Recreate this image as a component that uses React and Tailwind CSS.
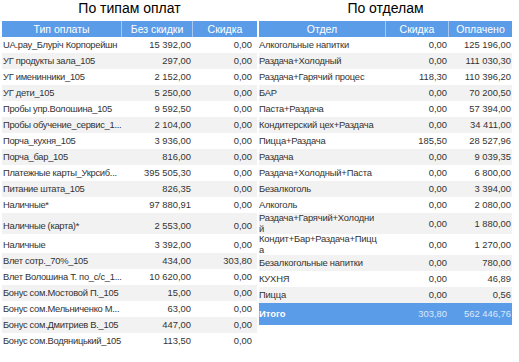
const payments = [
  ['UA.pay_Блуріч Корпорейшн', '15 392,00', '0,00'],
  ['УГ продукты зала_105', '297,00', '0,00'],
  ['УГ именинники_105', '2 152,00', '0,00'],
  ['УГ дети_105', '5 250,00', '0,00'],
  ['Пробы упр.Волошина_105', '9 592,50', '0,00'],
  ['Пробы обучение_сервис_1...', '2 104,00', '0,00'],
  ['Порча_кухня_105', '3 936,00', '0,00'],
  ['Порча_бар_105', '816,00', '0,00'],
  ['Платежные карты_Укрсиб...', '395 505,30', '0,00'],
  ['Питание штата_105', '826,35', '0,00'],
  ['Наличные*', '97 880,91', '0,00'],
  ['Наличные (карта)*', '2 553,00', '0,00', 'h-[21px]'],
  ['Наличные', '3 392,00', '0,00', 'h-[19px]'],
  ['Влет сотр._70%_105', '434,00', '303,80'],
  ['Влет Волошина Т. по_с/с_1...', '10 620,00', '0,00'],
  ['Бонус сом.Мостовой П._105', '15,00', '0,00'],
  ['Бонус сом.Мельниченко М...', '63,00', '0,00'],
  ['Бонус сом.Дмитриев В._105', '447,00', '0,00'],
  ['Бонус сом.Водяницький_105', '113,50', '0,00'],
]

const departments = [
  [['Алкогольные напитки'], '0,00', '125 196,00'],
  [['Раздача+Холодный'], '0,00', '111 030,30'],
  [['Раздача+Гарячий процес'], '118,30', '110 396,20'],
  [['БАР'], '0,00', '70 200,50'],
  [['Паста+Раздача'], '0,00', '57 394,00'],
  [['Кондитерский цех+Раздача'], '0,00', '34 411,00'],
  [['Пицца+Раздача'], '185,50', '28 527,96'],
  [['Раздача'], '0,00', '9 039,35'],
  [['Раздача+Холодный+Паста'], '0,00', '6 800,00'],
  [['Безалкоголь'], '0,00', '3 394,00'],
  [['Алкоголь'], '0,00', '2 080,00'],
  [['Раздача+Гарячий+Холодни', 'й'], '0,00', '1 880,00', 'h-[21px]'],
  [['Кондит+Бар+Раздача+Пицц', 'а'], '0,00', '1 270,00', 'h-[21px]'],
  [['Безалкогольные напитки'], '0,00', '780,00'],
  [['КУХНЯ'], '0,00', '46,89'],
  [['Пицца'], '0,00', '0,56'],
]

const font = { fontFamily: '"Liberation Sans", Arial, sans-serif' }

function Title({ children }) {
  return (
    <div className="h-[21px] text-center text-[14px] leading-[17px] text-black">{children}</div>
  )
}

function PaymentsTable() {
  return (
    <div className="w-[255px]">
      <Title>По типам оплат</Title>
      <div className="grid h-[16px] grid-cols-[119px_71px_65px] bg-[#5b9ce8] text-[10.5px] leading-[16px] text-white">
        <div className="text-center">Тип оплаты</div>
        <div className="border-l border-[#a9c9f2] text-center">Без скидки</div>
        <div className="border-l border-[#a9c9f2] text-center">Скидка</div>
      </div>
      {payments.map(([name, full, disc, h], i) => (
        <div
          key={name}
          className={`grid grid-cols-[119px_71px_65px] items-end text-[9.4px] leading-[16px] text-[#333] ${h || 'h-[16px]'} ${i % 2 ? 'bg-[#f2f2f2]' : 'bg-white'}`}
        >
          <div className="whitespace-nowrap pl-[1px] tracking-[-0.3px]">{name}</div>
          <div className="pr-[1px] text-right">{full}</div>
          <div className="pr-[5px] text-right">{disc}</div>
        </div>
      ))}
    </div>
  )
}

function DepartmentsTable() {
  return (
    <div className="w-[253px]">
      <Title>По отделам</Title>
      <div className="grid h-[16px] grid-cols-[126px_63px_64px] bg-[#5b9ce8] text-[10.5px] leading-[16px] text-white">
        <div className="text-center">Отдел</div>
        <div className="border-l border-[#a9c9f2] text-center">Скидка</div>
        <div className="border-l border-[#a9c9f2] text-center">Оплачено</div>
      </div>
      {departments.map(([lines, disc, paid, h], i) => (
        <div
          key={lines[0]}
          className={`grid grid-cols-[126px_63px_64px] items-center text-[9.4px] text-[#333] ${h || 'h-[16px]'} ${i % 2 ? 'bg-[#f2f2f2]' : 'bg-white'}`}
        >
          <div className="whitespace-nowrap leading-[10.5px] tracking-[-0.2px]">
            {lines.map((l) => (
              <div key={l}>{l}</div>
            ))}
          </div>
          <div className="pr-[1px] text-right leading-[16px]">{disc}</div>
          <div className="pr-[1px] text-right leading-[16px]">{paid}</div>
        </div>
      ))}
      <div className="grid h-[22px] grid-cols-[126px_63px_64px] items-center bg-[#5b9ce8] text-[9.4px] leading-[16px]">
        <div className="font-bold text-white">Итого</div>
        <div className="pr-[1px] text-right text-[#dce9fa]">303,80</div>
        <div className="pr-[1px] text-right text-[#dce9fa]">562 446,76</div>
      </div>
    </div>
  )
}

export default function App() {
  return (
    <div className="flex h-[362px] w-[519px] gap-[2px] bg-white pl-[2px]" style={font}>
      <PaymentsTable />
      <DepartmentsTable />
    </div>
  )
}
